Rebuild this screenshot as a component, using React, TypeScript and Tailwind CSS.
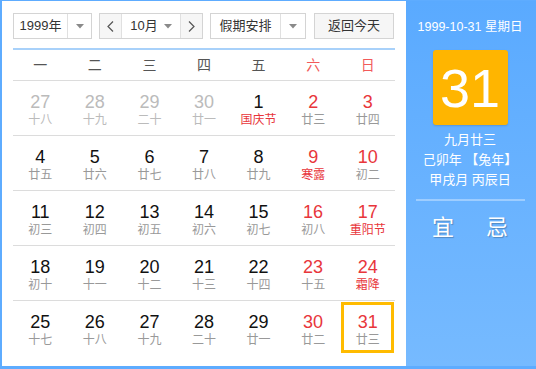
import React from "react";

type Cell = { d: number; l: string; other?: boolean; fest?: boolean; we?: boolean; today?: boolean };

const rows: Cell[][] = [
  [
    { d: 27, l: "十八", other: true },
    { d: 28, l: "十九", other: true },
    { d: 29, l: "二十", other: true },
    { d: 30, l: "廿一", other: true },
    { d: 1, l: "国庆节", fest: true },
    { d: 2, l: "廿三", we: true },
    { d: 3, l: "廿四", we: true },
  ],
  [
    { d: 4, l: "廿五" },
    { d: 5, l: "廿六" },
    { d: 6, l: "廿七" },
    { d: 7, l: "廿八" },
    { d: 8, l: "廿九" },
    { d: 9, l: "寒露", we: true, fest: true },
    { d: 10, l: "初二", we: true },
  ],
  [
    { d: 11, l: "初三" },
    { d: 12, l: "初四" },
    { d: 13, l: "初五" },
    { d: 14, l: "初六" },
    { d: 15, l: "初七" },
    { d: 16, l: "初八", we: true },
    { d: 17, l: "重阳节", we: true, fest: true },
  ],
  [
    { d: 18, l: "初十" },
    { d: 19, l: "十一" },
    { d: 20, l: "十二" },
    { d: 21, l: "十三" },
    { d: 22, l: "十四" },
    { d: 23, l: "十五", we: true },
    { d: 24, l: "霜降", we: true, fest: true },
  ],
  [
    { d: 25, l: "十七" },
    { d: 26, l: "十八" },
    { d: 27, l: "十九" },
    { d: 28, l: "二十" },
    { d: 29, l: "廿一" },
    { d: 30, l: "廿二", we: true },
    { d: 31, l: "廿三", we: true, today: true },
  ],
];

const weekdays = ["一", "二", "三", "四", "五", "六", "日"];

function Caret() {
  return (
    <svg width="8" height="5" viewBox="0 0 8 5">
      <path d="M0 0 L8 0 L4 4.5 Z" fill="#8a8a8a" />
    </svg>
  );
}

const font = "font-['Liberation_Sans','Noto_Sans_CJK_SC',sans-serif]";

export default function App() {
  return (
    <div className={`w-[536px] h-[369px] bg-[#5eacff] pl-[2px] pt-[1px] pb-[3px] ${font}`}>
      <div className="flex h-full">
        <div className="w-[404px] h-full bg-white px-[11px] pt-[12px]">
          {/* controls */}
          <div className="flex h-[26px] text-[13px] text-[#333]">
            <div className="flex w-[79px] border border-[#d4d4d4] bg-white">
              <div className="w-[54px] flex items-center justify-center border-r border-[#e0e0e0]">1999年</div>
              <div className="flex-1 flex items-center justify-center"><Caret /></div>
            </div>
            <div className="ml-[7px] flex w-[104px] border border-[#d4d4d4]">
              <div className="w-[22px] flex items-center justify-center bg-[#f6f6f6] border-r border-[#e0e0e0]">
                <svg width="7" height="11" viewBox="0 0 7 11"><path d="M6 0.5 L1 5.5 L6 10.5" fill="none" stroke="#555" strokeWidth="1.2" /></svg>
              </div>
              <div className="flex-1 flex items-center justify-center gap-[6px] bg-white border-r border-[#e0e0e0]">
                <span>10月</span>
                <Caret />
              </div>
              <div className="w-[21px] flex items-center justify-center bg-[#f6f6f6]">
                <svg width="7" height="11" viewBox="0 0 7 11"><path d="M1 0.5 L6 5.5 L1 10.5" fill="none" stroke="#555" strokeWidth="1.2" /></svg>
              </div>
            </div>
            <div className="ml-[7px] flex w-[96px] border border-[#d4d4d4] bg-white">
              <div className="w-[70px] flex items-center justify-center border-r border-[#e0e0e0]">假期安排</div>
              <div className="flex-1 flex items-center justify-center"><Caret /></div>
            </div>
            <div className="ml-[8px] w-[80px] flex items-center justify-center border border-[#d4d4d4] bg-[#f6f6f6]">返回今天</div>
          </div>
          <div className="mt-[9px] h-[2px] bg-[#a8d1fa]" />
          {/* weekday header */}
          <div className="grid grid-cols-7 h-[31px] border-b border-[#dcdcdc] text-[14px]">
            {weekdays.map((w, i) => (
              <div key={w} className={`flex items-center justify-center ${i >= 5 ? "text-[#f25a5a]" : "text-[#555]"}`}>
                {w}
              </div>
            ))}
          </div>
          {rows.map((r, ri) => (
            <div key={ri} className={`grid grid-cols-7 h-[55px] ${ri < 4 ? "border-b border-[#dcdcdc]" : ""}`}>
              {r.map((c, ci) => {
                const numColor = c.other ? "text-[#bbbbbb]" : c.we ? "text-[#e8363b]" : "text-[#111]";
                const lunColor = c.other ? "text-[#bbbbbb]" : c.fest ? "text-[#e8363b]" : "text-[#999]";
                return (
                  <div key={ci} className="relative flex flex-col items-center pt-[11px]">
                    {c.today && (
                      <div className="absolute left-[1px] right-[1px] top-[1px] bottom-[3px] border-[3px] border-[#ffbb00]" />
                    )}
                    <div className={`text-[18px] leading-[20px] ${numColor}`}>{c.d}</div>
                    <div className={`text-[12px] leading-[16px] ${lunColor}`}>{c.l}</div>
                  </div>
                );
              })}
            </div>
          ))}
        </div>
        <div className="flex-1 h-full bg-gradient-to-b from-[#5aaaff] to-[#76baff] flex flex-col items-center pr-[2px] text-white">
          <div className="mt-[18px] text-[12.5px] leading-[16px]">1999-10-31 星期日</div>
          <div className="mt-[15px] w-[75px] h-[75px] rounded-[3px] bg-[#ffb500] flex items-center justify-center text-[54px] leading-none shadow-[0_1px_2px_rgba(0,0,0,0.15)]">
            31
          </div>
          <div className="mt-[5px] text-[13px] leading-[20px] text-center">
            <div>九月廿三</div>
            <div>己卯年 【兔年】</div>
            <div>甲戌月 丙辰日</div>
          </div>
          <div className="mt-[9px] w-[109px] h-[2px] bg-[rgba(255,255,255,0.35)]" />
          <div className="mt-[14px] flex gap-[32px] text-[22px] leading-[26px] [text-shadow:1px_1px_1px_rgba(0,0,0,0.25)]">
            <span>宜</span>
            <span>忌</span>
          </div>
        </div>
      </div>
    </div>
  );
}
